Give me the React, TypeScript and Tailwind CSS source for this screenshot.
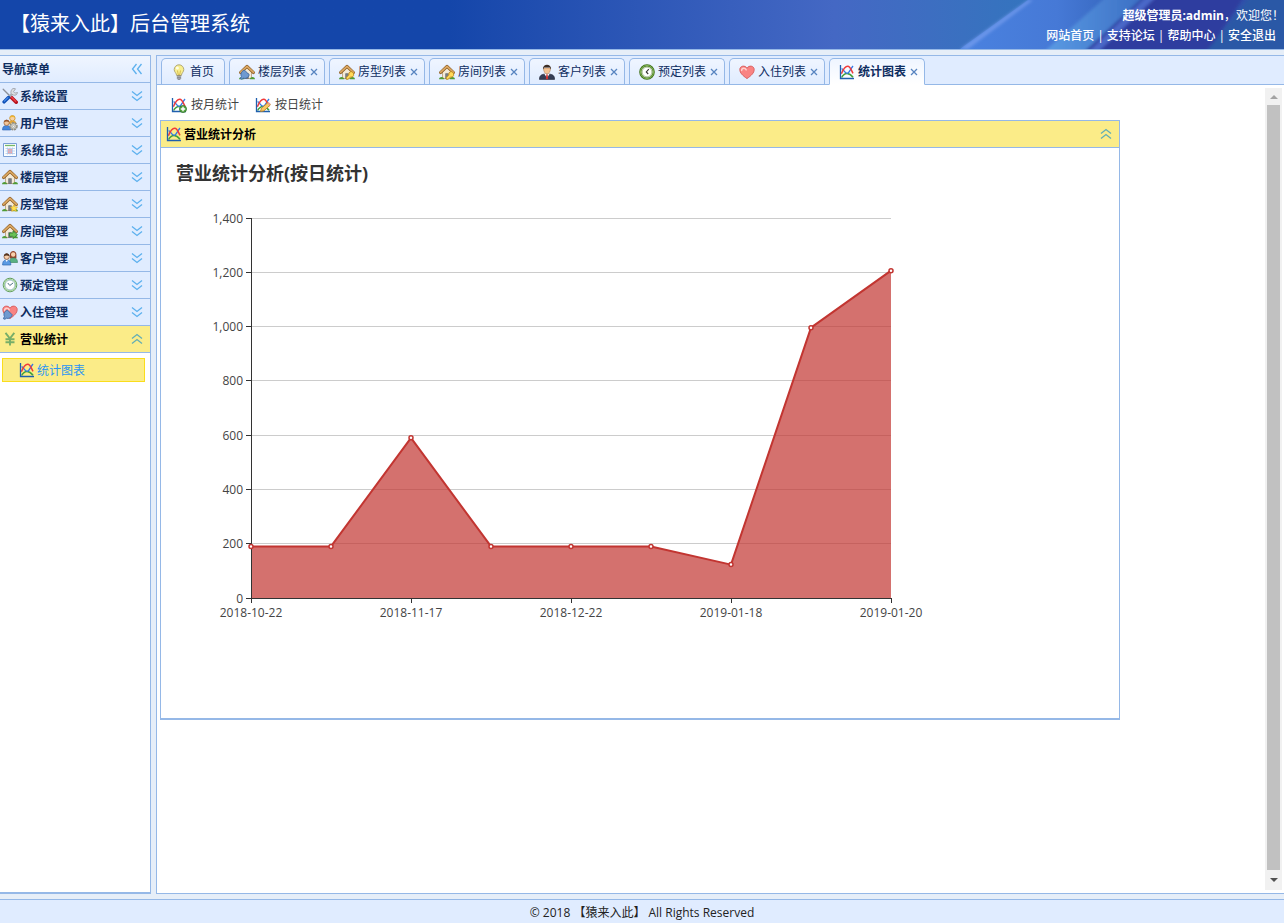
import { useState } from 'react';
import type { ReactNode } from 'react';

const house = (
  <>
    <path d="M3.500 7.500v7h9v-7L8 3.200z" fill="#f3ead8" stroke="#b79a72" strokeWidth=".8" />
    <path d="M6.600 9.600h2.800v5H6.600z" fill="#7a7f86" stroke="#565a60" strokeWidth=".5" />
    <path d="M1.500 8.600L8 2.400l6.500 6.200" fill="none" stroke="#8a5a22" strokeWidth="2.900" strokeLinecap="round" strokeLinejoin="round" />
    <path d="M1.500 8.400L8 2.300l6.500 6.100" fill="none" stroke="#dca964" strokeWidth="1.700" strokeLinecap="round" strokeLinejoin="round" />
    <path d="M0 15.200c.2-2.600 4.400-3.200 5.400 0zM16 15.200c-.2-2.600-4.400-3.200-5.400 0z" fill="#4f9a36" />
  </>
);

const chart = (
  <>
    <path d="M2.600 13.500C5.500 8.200 10 8 14 13.200" fill="none" stroke="#43a03c" strokeWidth="1.500" />
    <path d="M2.600 4.600c2 .6 3.400 5.200 5.800 4.800 2-.4 3-4.400 5.600-7.400" fill="none" stroke="#3478e5" strokeWidth="1.400" />
    <path d="M2.400 9.800C4.500 4.500 6.500 2.200 8.800 2.300c2.600.1 3.400 4 5.200 7" fill="none" stroke="#f03a3a" strokeWidth="1.500" />
    <path d="M1.500 1v13.500H15" fill="none" stroke="#1f5fae" strokeWidth="1.300" />
  </>
);

const key = (
  <path d="M11 7.500a3 3 0 0 1 1.500 5.400l-2.600.4-1.600 2H6.200v-1.800l2.600-2.400A3 3 0 0 1 11 7.500z" fill="#ffd95a" stroke="#b98414" strokeWidth=".8" />
);

const heart = (
  <>
    <path d="M8 14.600C3.500 11.500.8 8.800.8 5.500.8 1.800 6 .8 8 4.200c2-3.400 7.200-2.400 7.200 1.300 0 3.300-2.700 6-7.200 9.100z" fill="#f98383" stroke="#d65b5b" strokeWidth=".9" />
    <path d="M2.600 6.500c0-2.800 3.600-3 4.600-.6" fill="none" stroke="#ffd0cc" strokeWidth="1.500" strokeLinecap="round" />
  </>
);

const plug = (
  <path d="M3.200 15.300l-1.800-.6 1-2.200C1 9.600 3 6.600 5.600 6.200l4.600 4.600c-.6 2.800-3.800 4.400-6 3.200z" fill="#6f9ad0" stroke="#3c68a3" strokeWidth=".9" />
);

const icons: Record<string, ReactNode> = {
  house,
  chart,
  heart,
  tools: (
    <>
      <path d="M1.200 1.200l8 8" stroke="#8b9099" strokeWidth="1.300" strokeLinecap="round" />
      <path d="M9.200 9.200l5 5" stroke="#b51521" strokeWidth="3.600" strokeLinecap="round" />
      <path d="M9.600 9.300l4 4" stroke="#ef3f45" strokeWidth="1.500" strokeLinecap="round" />
      <path d="M11.500 4.500l-5 5" stroke="#a9adb3" strokeWidth="2.400" />
      <path d="M13.500.8a3.300 3.300 0 1 0 2 3.700l-2.600.6-1.400-1.400z" fill="#dcdfe3" stroke="#8e9299" strokeWidth=".7" />
      <path d="M6.500 9.500l-4.400 4.400" stroke="#0f4fb5" strokeWidth="3.400" strokeLinecap="round" />
      <path d="M6 9.600l-3.600 3.600" stroke="#4b90ee" strokeWidth="1.200" strokeLinecap="round" />
    </>
  ),
  userGear: (
    <>
      <path d="M6.500 9c0-3 2-3.600 4-3.600S14.400 6.200 14.400 9z" fill="#e5a93b" />
      <circle cx="10.400" cy="3.200" r="2.700" fill="#f6d2a4" stroke="#c98e23" strokeWidth=".8" />
      <path d="M7.800 2.600c.6-2.600 4.600-2.600 5.200 0-1.600-.8-3.600-.8-5.200 0z" fill="#eeb52e" />
      <path d="M.5 15c0-3.800 2-4.400 4-4.400s4.200.6 4.200 4.400z" fill="#4686dc" stroke="#2b62b0" strokeWidth=".6" />
      <circle cx="4.600" cy="7.800" r="2.700" fill="#f4c79c" stroke="#98603a" strokeWidth=".7" />
      <path d="M2 7.200c.3-3.200 5-3.200 5.300 0-1.600-.9-3.700-.9-5.300 0z" fill="#97552c" />
      <circle cx="11.500" cy="11.300" r="3.300" fill="#eee" stroke="#8d8d83" strokeWidth="1.900" strokeDasharray="2 .7" />
      <circle cx="11.500" cy="11.300" r="2.700" fill="#d9d9d2" stroke="#97978c" strokeWidth=".8" />
      <circle cx="11.500" cy="11.300" r="1" fill="#fff" stroke="#8d8d83" strokeWidth=".5" />
    </>
  ),
  log: (
    <>
      <path d="M1.500 1.500h13v13h-13z" fill="#fbfdff" stroke="#7ba0d6" />
      <path d="M3 3.500h10" stroke="#76b867" strokeWidth="1.300" />
      <path d="M6 7h4v5H6z" fill="#f6a2a2" />
      <path d="M3.500 6.500h9.500M3.500 9h9.500M3.500 11.500h9.500M5.500 5.500v7M8 5.500v7M10.500 5.500v7" stroke="#a9c4e8" strokeWidth=".7" />
    </>
  ),
  houseStar: (
    <>
      {house}
      <path d="M12 8.600l1.100 2.300 2.500.3-1.800 1.700.5 2.500L12 14.200l-2.300 1.200.5-2.500-1.800-1.700 2.500-.3z" fill="#ffe052" stroke="#d8a51c" strokeWidth=".6" />
    </>
  ),
  houseGo: (
    <>
      {house}
      <path d="M7.500 10h3.500V7.800l4.500 3.900-4.500 3.800v-2.200H7.500z" fill="#6bc156" stroke="#2f7d2a" strokeWidth=".8" />
    </>
  ),
  houseKey: (
    <>
      {house}
      <g transform="translate(1 0)">{key}</g>
    </>
  ),
  houseLink: (
    <>
      {house}
      {plug}
    </>
  ),
  group: (
    <>
      <path d="M8 5c-.4-5.500 6.800-5.500 6.400 0v3.500H8z" fill="#93442c" />
      <circle cx="11.200" cy="4.500" r="2.200" fill="#f8cfad" />
      <path d="M7.600 12.500c0-4 1.600-4.600 3.600-4.600s4.300.6 4.300 4.600z" fill="#58b184" stroke="#338057" strokeWidth=".6" />
      <path d="M.6 15c0-4 1.600-5 4-5s4.200 1 4.200 5z" fill="#5b9be4" stroke="#2b67b0" strokeWidth=".7" />
      <path d="M3.500 10l1.200 2 1.200-2z" fill="#fff" />
      <circle cx="4.700" cy="6.700" r="2.700" fill="#f8cfad" stroke="#7c4a2e" strokeWidth=".7" />
      <path d="M1.900 6.300c0-4 5.600-4 5.600 0-1.600-1.200-4-1.200-5.600 0z" fill="#54331f" />
    </>
  ),
  clock: (
    <>
      <circle cx="8" cy="8" r="6.800" fill="#f3faef" stroke="#5d9a59" strokeWidth="1" />
      <circle cx="8" cy="8" r="5.700" fill="none" stroke="#a8d49f" strokeWidth="1.300" />
      <circle cx="8" cy="8" r="4.800" fill="#fff" stroke="#6f9cb0" strokeWidth=".5" />
      <path d="M5.800 6l2 2.500L11 6" fill="none" stroke="#4f7486" strokeWidth="1" />
    </>
  ),
  clockDark: (
    <>
      <circle cx="8" cy="8" r="6.700" fill="#fff" stroke="#3f7119" strokeWidth="2.200" />
      <circle cx="8" cy="8" r="6.500" fill="none" stroke="#86b957" strokeWidth="1" />
      <circle cx="8" cy="8" r="4.900" fill="#fff" stroke="#55832d" strokeWidth=".5" />
      <path d="M9.800 5.200L7.300 8l1.900 2" fill="none" stroke="#333" strokeWidth="1.100" />
    </>
  ),
  heartLink: (
    <>
      {heart}
      {plug}
    </>
  ),
  yen: (
    <path d="M3.500 1.800l4.400 5.700 4.400-5.700M3.500 8.200h9M3.500 11.200h9M8 7.500v7" fill="none" stroke="#77ae68" strokeWidth="1.900" />
  ),
  bulb: (
    <>
      <path d="M8 .8a4.800 4.800 0 0 1 4.800 4.800c0 2.400-2.200 3.300-2.500 6H5.700c-.3-2.700-2.500-3.600-2.500-6A4.800 4.800 0 0 1 8 .8z" fill="#f8ef8e" stroke="#aaa070" strokeWidth=".9" />
      <path d="M6.500 6.500L7.300 11h1.400l.8-4.500" fill="none" stroke="#c9a63a" strokeWidth=".7" />
      <circle cx="6.400" cy="4" r="1.500" fill="#fffde8" />
      <path d="M5.900 11.600h4.200v2.800L9 15.700H7l-1.100-1.300z" fill="#70757c" />
      <path d="M5.900 12.700h4.200M5.900 14.200h4.200" stroke="#dde0e3" strokeWidth=".6" />
    </>
  ),
  person: (
    <>
      <path d="M.4 15.400C.4 11 3 10 8 10s7.600 1 7.600 5.400z" fill="#353d55" stroke="#1e2435" strokeWidth=".6" />
      <path d="M5.300 9.800L8 14l2.700-4.200z" fill="#fff" />
      <path d="M7.400 10.300h1.200l.6 5H6.800z" fill="#cf3030" />
      <path d="M4.500 4c0 7.800 7 7.800 7 0z" fill="#f3c394" stroke="#a87345" strokeWidth=".5" />
      <path d="M4 5.600C3.200-1 12.800-1 12 5.600L10.800 3.400H5.200z" fill="#3b2d24" />
    </>
  ),
  chartAdd: (
    <>
      {chart}
      <circle cx="12" cy="12" r="3.500" fill="#5aa645" stroke="#2d7423" strokeWidth=".8" />
      <path d="M12 9.800v4.400M9.800 12h4.400" stroke="#fff" strokeWidth="1.400" />
    </>
  ),
  chartEdit: (
    <>
      {chart}
      <path d="M5.500 14.500l.8-3.200L13 5.500l2.400 2.400-6.500 6z" fill="#f9c860" stroke="#b67b1f" strokeWidth=".8" />
      <path d="M12.300 6.100L13.600 5l2 2-1.400 1.400z" fill="#e89a8e" />
    </>
  ),
};

function Icon({ name }: { name: string }) {
  return (
    <svg viewBox="0 0 16 16" className="size-4 shrink-0" aria-hidden="true">
      {icons[name]}
    </svg>
  );
}

const arrows = {
  down: 'M3 3.500l5 4 5-4M3 8.500l5 4 5-4',
  up: 'M3 7.500l5-4 5 4M3 12.500l5-4 5 4',
  left: 'M7.500 3l-4 5 4 5M12.500 3l-4 5 4 5',
};

function Chevrons({ direction, color = '#5cb0ee' }: { direction: keyof typeof arrows; color?: string }) {
  return (
    <svg viewBox="0 0 16 16" className="size-4 shrink-0" aria-hidden="true">
      <path d={arrows[direction]} fill="none" stroke={color} strokeWidth="1.300" />
    </svg>
  );
}

const menus = [
  { icon: 'tools', title: '系统设置' },
  { icon: 'userGear', title: '用户管理' },
  { icon: 'log', title: '系统日志' },
  { icon: 'house', title: '楼层管理' },
  { icon: 'houseStar', title: '房型管理' },
  { icon: 'houseGo', title: '房间管理' },
  { icon: 'group', title: '客户管理' },
  { icon: 'clock', title: '预定管理' },
  { icon: 'heartLink', title: '入住管理' },
  { icon: 'yen', title: '营业统计' },
];

const tabs = [
  { icon: 'bulb', title: '首页' },
  { icon: 'houseLink', title: '楼层列表' },
  { icon: 'houseKey', title: '房型列表' },
  { icon: 'houseKey', title: '房间列表' },
  { icon: 'person', title: '客户列表' },
  { icon: 'clockDark', title: '预定列表' },
  { icon: 'heart', title: '入住列表' },
  { icon: 'chart', title: '统计图表' },
];

const links = ['网站首页', '支持论坛', '帮助中心', '安全退出'];

const values = [190, 190, 590, 190, 190, 190, 123, 996, 1206];
const dates = ['2018-10-22', '2018-11-17', '2018-12-22', '2019-01-18', '2019-01-20'];

function HeaderBackground() {
  return (
    <svg viewBox="-60 0 344 49" preserveAspectRatio="none" className="absolute top-0 right-0 h-full w-[344px]" aria-hidden="true">
      <defs>
        <linearGradient id="sky" x1="0" x2="1">
          <stop offset="0" stopColor="#4a82e0" />
          <stop offset=".3" stopColor="#4679d6" />
          <stop offset=".5" stopColor="#3566bd" />
          <stop offset="1" stopColor="#2c4aa4" />
        </linearGradient>
        <linearGradient id="beam" x1="0" x2="1">
          <stop offset="0" stopColor="#5a9be4" />
          <stop offset="1" stopColor="#3c6fc4" />
        </linearGradient>
        <filter id="soft" x="-10%" width="120%">
          <feGaussianBlur stdDeviation="1.500" />
        </filter>
      </defs>
      <path d="M-40 49L28 0h256v49z" fill="url(#sky)" />
      <g filter="url(#soft)">
        <path d="M-40 49L28 0h5L-32 49z" fill="#7ba0f0" opacity=".7" />
        <path d="M44 52L106 -3h36L84 52z" fill="url(#beam)" />
        <path d="M84 52L144 -3h100l-36 55z" fill="#2f3e9f" />
        <path d="M88 52L146 -3h10L98 52z" fill="#4a68c8" />
        <path d="M206 52L250 -3h40v55z" fill="#2b58a6" />
      </g>
    </svg>
  );
}

function AreaChart() {
  const left = 90;
  const bottom = 413;
  const points = values.map((v, i) => [left + i * 80, bottom - (v / 1400) * 380]);
  const line = points.map((p) => p.join(',')).join(' ');
  const ticks = [0, 200, 400, 600, 800, 1000, 1200, 1400];

  return (
    <svg width="800" height="450" className="block max-w-full fill-[#444] text-xs" role="img" aria-label="营业统计分析(按日统计)">
      {ticks.map((t) => {
        const y = Math.floor(bottom - (t / 1400) * 380) + 0.5;
        return (
          <g key={t}>
            {t > 0 && <path d={`M${left} ${y}h640`} stroke="#ccc" />}
            <path d={`M${left - 5} ${y}h5`} stroke="#333" />
            <text x={left - 8} y={y + 4} textAnchor="end">
              {t.toLocaleString('en-US')}
            </text>
          </g>
        );
      })}
      <polygon points={`${left},${bottom} ${line} ${left + 640},${bottom}`} fill="#c23531" fillOpacity=".7" />
      <path d={`M${left + 0.5} 33v381M${left} ${bottom + 0.5}h641`} stroke="#333" />
      {dates.map((d, i) => (
        <g key={d}>
          <path d={`M${left + i * 160 + 0.5} ${bottom}v5`} stroke="#333" />
          <text x={left + i * 160} y={bottom + 19} textAnchor="middle">
            {d}
          </text>
        </g>
      ))}
      <polyline points={line} fill="none" stroke="#c23531" strokeWidth="2" strokeLinejoin="bevel" />
      {points.map(([x, y]) => (
        <circle key={x} cx={x} cy={y} r="2" fill="#fff" stroke="#c23531" strokeWidth="1.500" />
      ))}
    </svg>
  );
}

function Sidebar() {
  const [selected, setSelected] = useState('营业统计');

  return (
    <aside className="w-[151px] shrink-0 border-t border-r border-b-2 border-[#95b8e7] bg-white">
      <div className="flex h-[27px] items-center justify-between border-b border-[#95b8e7] bg-linear-to-b from-[#eff5ff] to-[#e0ecff] pr-[5px] pl-0.5 font-bold text-[#0e2d5f]">
        <h2 className="pt-0.5">导航菜单</h2>
        <button type="button" aria-label="收起菜单">
          <Chevrons direction="left" />
        </button>
      </div>
      <nav>
        {menus.map((menu) => {
          const open = menu.title === selected;
          return (
            <button
              key={menu.title}
              type="button"
              aria-expanded={open}
              onClick={() => setSelected(menu.title)}
              className={`flex h-[27px] w-full items-center gap-0.5 border-b border-[#95b8e7] pr-[5px] pl-0.5 font-bold ${
                open ? 'bg-[#fbec88] text-black' : 'bg-[#e0ecff] text-[#0e2d5f]'
              }`}
            >
              <Icon name={menu.icon} />
              <span className="flex-1 pt-0.5 text-left">{menu.title}</span>
              <Chevrons direction={open ? 'up' : 'down'} color={open ? '#62adb5' : undefined} />
            </button>
          );
        })}
        {selected === '营业统计' && (
          <a href="#chart" className="mt-[5px] mr-[5px] ml-0.5 flex h-6 items-center gap-0.5 border border-[#fadd1c] bg-[#fbec88] pl-4 text-[#2a95f5]">
            <Icon name="chart" />
            <span className="pt-0.5">统计图表</span>
          </a>
        )}
      </nav>
    </aside>
  );
}

function Tabs() {
  const [active, setActive] = useState('统计图表');

  return (
    <div className="flex h-[29px] shrink-0 items-end gap-1 border-b border-[#95b8e7] bg-[#e0ecff] pl-1">
      {tabs.map((tab) => {
        const current = tab.title === active;
        return (
          <div
            key={tab.title}
            className={`flex items-center rounded-t-[5px] border border-[#95b8e7] pl-[9px] text-[#0e2d5f] ${
              current
                ? '-mb-px h-[27px] border-b-white bg-linear-to-b from-[#eff5ff] to-white font-bold'
                : 'h-[26px] border-b-0 bg-linear-to-b from-[#eff5ff] to-[#e0ecff]'
            } ${tab.title === '首页' ? 'pr-2.5' : 'pr-1.5'}`}
          >
            <button type="button" onClick={() => setActive(tab.title)} className="flex items-center gap-[3px]">
              <Icon name={tab.icon} />
              {tab.title}
            </button>
            {tab.title !== '首页' && (
              <button type="button" aria-label={`关闭${tab.title}`} className="ml-1 text-[#5784c0]">
                <svg viewBox="0 0 8 8" className="size-2">
                  <path d="M1 1l6 6M7 1L1 7" fill="none" stroke="currentColor" strokeWidth="1.300" />
                </svg>
              </button>
            )}
          </div>
        );
      })}
    </div>
  );
}

function ScrollBar() {
  return (
    <div className="mt-[3px] mr-0.5 mb-[3px] flex w-[17px] shrink-0 flex-col items-center bg-[#f1f1f1]">
      <button type="button" aria-label="向上滚动" className="flex h-[17px] items-center">
        <svg viewBox="0 0 8 4" className="h-1 w-2">
          <path d="M0 4l4-4 4 4z" fill="#a3a3a3" />
        </svg>
      </button>
      <div className="w-[13px] flex-1 bg-[#c1c1c1]" />
      <button type="button" aria-label="向下滚动" className="flex h-5 items-center">
        <svg viewBox="0 0 8 4" className="h-1 w-2">
          <path d="M0 0l4 4 4-4z" fill="#505050" />
        </svg>
      </button>
    </div>
  );
}

export default function App() {
  return (
    <div className="flex h-screen flex-col overflow-hidden bg-[#e6eef8] font-['Open_Sans','Noto_Sans_CJK_SC',sans-serif] text-xs text-[#333]">
      <header className="relative flex h-[50px] shrink-0 items-center justify-between border-b border-[#95b8e7] bg-linear-to-r from-[#1446aa] from-35% via-[#4468c4] via-65% to-[#3474be] to-80% text-white">
        <HeaderBackground />
        <h1 className="relative pb-0.5 pl-2.5 text-xl">【猿来入此】后台管理系统</h1>
        <div className="relative pt-0.5 pr-2 text-right leading-5">
          <p className="-mr-2">
            <b>超级管理员:admin</b>，欢迎您！
          </p>
          <p className="flex justify-end gap-[3px] font-medium">
            {links.map((link, i) => (
              <span key={link} className="flex gap-[3px]">
                {i > 0 && <span>|</span>}
                <a href="#top">{link}</a>
              </span>
            ))}
          </p>
        </div>
      </header>

      <div className="flex min-h-0 flex-1 gap-[5px] py-[5px]">
        <Sidebar />
        <main className="flex min-w-0 flex-1 flex-col border-y border-l border-[#95b8e7] bg-white">
          <Tabs />
          <div className="flex min-h-0 flex-1">
            <div className="min-w-0 flex-1 overflow-hidden px-[3px]">
              <div className="flex h-[35px] items-center gap-4 pt-1 pl-[11px] text-[#444]">
                <button type="button" className="flex items-center gap-1">
                  <Icon name="chartAdd" />
                  按月统计
                </button>
                <button type="button" className="flex items-center gap-1">
                  <Icon name="chartEdit" />
                  按日统计
                </button>
              </div>
              <section id="chart" className="w-full max-w-[960px] border border-b-2 border-[#95b8e7]">
                <div className="flex h-[27px] items-center border-b border-[#95b8e7] bg-[#fbec88] px-[5px] font-bold text-black">
                  <Icon name="chart" />
                  <h2 className="flex-1 pt-0.5 pl-0.5">营业统计分析</h2>
                  <button type="button" aria-label="折叠">
                    <Chevrons direction="up" color="#62adb5" />
                  </button>
                </div>
                <div className="min-h-[570px] pt-[13px]">
                  <h3 className="pl-[15px] text-lg/6 font-bold">营业统计分析(按日统计)</h3>
                  <AreaChart />
                </div>
              </section>
            </div>
            <ScrollBar />
          </div>
        </main>
      </div>

      <footer className="flex h-6 shrink-0 items-center justify-center border-t border-[#95b8e7] bg-[#e0ecff] pt-0.5 text-[#222]">
        © 2018 【猿来入此】 All Rights Reserved
      </footer>
    </div>
  );
}
